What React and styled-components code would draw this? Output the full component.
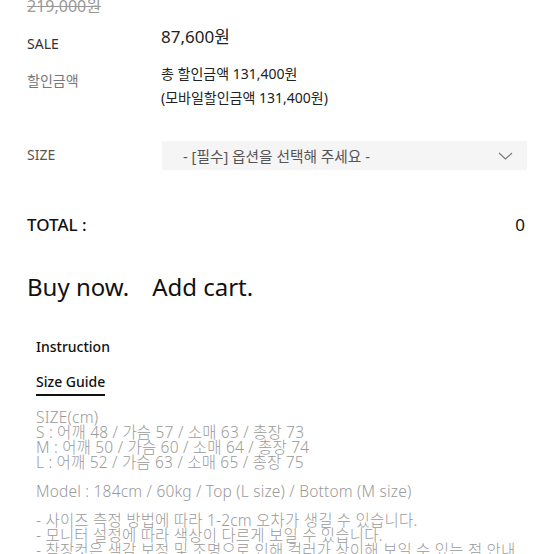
import React from "react";
import styled, { createGlobalStyle } from "styled-components";

const GlobalStyle = createGlobalStyle`
  html, body {
    margin: 0;
    padding: 0;
    background: #fff;
  }
  body {
    font-family: "Noto Sans", "Noto Sans CJK KR", sans-serif;
    color: #222;
    overflow: hidden;
  }
`;

// the screenshot is scrolled a bit, so the page starts slightly above the window
const Page = styled.div`
  width: 554px;
  margin-top: -5px;
  padding: 0 27px;
  box-sizing: border-box;
`;

const Row = styled.div`
  display: grid;
  grid-template-columns: 134px 1fr;
  align-items: start;
  margin-top: ${(p) => p.$gap || 0}px;
`;

const Label = styled.div`
  font-size: 14px;
  line-height: 24px;
  color: ${(p) => p.$color || "#333"};
  padding-top: ${(p) => p.$offset || 0}px;
`;

const OldPrice = styled.div`
  font-size: 16px;
  line-height: 22px;
  color: #999;
  text-decoration: line-through;
`;

const SalePrice = styled.div`
  font-size: 17px;
  line-height: 26px;
  color: #222;
`;

const DiscountText = styled.div`
  font-size: 14px;
  line-height: 24px;
  color: #222;
`;

const Select = styled.div`
  height: 29px;
  margin-left: 1px;
  background: #f5f5f5;
  display: flex;
  align-items: center;
  justify-content: space-between;
  padding: 0 14px 0 21px;
  font-size: 14.7px;
  color: #555;
`;

const TotalRow = styled.div`
  display: flex;
  justify-content: space-between;
  align-items: center;
  margin-top: 43px;
  font-size: 17px;
  line-height: 24px;
  font-weight: 500;
  color: #111;
`;

const TotalValue = styled.span`
  font-weight: 400;
  margin-right: 2px;
`;

const Actions = styled.div`
  display: flex;
  gap: 23px;
  margin-top: 32px;
`;

const ActionButton = styled.button`
  border: 0;
  background: none;
  padding: 0;
  font-family: inherit;
  font-size: 24px;
  line-height: 36px;
  color: #111;
  cursor: pointer;
`;

const Detail = styled.div`
  padding-left: 9px;
  margin-top: 32px;
`;

const Tab = styled.div`
  display: inline-block;
  font-size: 14px;
  line-height: 20px;
  font-weight: 500;
  color: #111;
  padding-bottom: 2px;
  border-bottom: 2px solid ${(p) => (p.$active ? "#111" : "transparent")};
`;

const Tabs = styled.div`
  display: flex;
  flex-direction: column;
  align-items: flex-start;
  gap: 11px;
`;

const Guide = styled.div`
  margin-top: 14px;
  font-size: 15.5px;
  line-height: 15px;
  letter-spacing: 0.2px;
  font-weight: 300;
  color: #9a9a9a;
`;

const Para = styled.p`
  margin: 0 0 14px;
`;

const Chevron = () => (
  <svg width="15" height="8" viewBox="0 0 15 8" fill="none">
    <path d="M1 1 L7.5 7 L14 1" stroke="#777" strokeWidth="1.1" />
  </svg>
);

const App = () => {
  return (
    <>
      <GlobalStyle />
      <Page>
        <OldPrice>219,000원</OldPrice>

        <Row $gap={7}>
          <Label $offset={8}>SALE</Label>
          <SalePrice>87,600원</SalePrice>
        </Row>

        <Row $gap={6}>
          <Label $color="#777" $offset={7}>할인금액</Label>
          <div>
            <DiscountText>총 할인금액 131,400원</DiscountText>
            <DiscountText>(모바일할인금액 131,400원)</DiscountText>
          </div>
        </Row>

        <Row $gap={31}>
          <Label $color="#555" $offset={2}>SIZE</Label>
          <Select>
            <span>- [필수] 옵션을 선택해 주세요 -</span>
            <Chevron />
          </Select>
        </Row>

        <TotalRow>
          <span>TOTAL :</span>
          <TotalValue>0</TotalValue>
        </TotalRow>

        <Actions>
          <ActionButton>Buy now.</ActionButton>
          <ActionButton>Add cart.</ActionButton>
        </Actions>

        <Detail>
          <Tabs>
            <Tab>Instruction</Tab>
            <Tab $active>Size Guide</Tab>
          </Tabs>

          <Guide>
            <Para>
              SIZE(cm)
              <br />S : 어깨 48 / 가슴 57 / 소매 63 / 총장 73
              <br />M : 어깨 50 / 가슴 60 / 소매 64 / 총장 74
              <br />L : 어깨 52 / 가슴 63 / 소매 65 / 총장 75
            </Para>
            <Para>Model : 184cm / 60kg / Top (L size) / Bottom (M size)</Para>
            <Para>
              - 사이즈 측정 방법에 따라 1-2cm 오차가 생길 수 있습니다.
              <br />- 모니터 설정에 따라 색상이 다르게 보일 수 있습니다.
              <br />- 착장컷은 색감 보정 및 조명으로 인해 컬러가 상이해 보일 수 있는 점 안내드립니다.
            </Para>
          </Guide>
        </Detail>
      </Page>
    </>
  );
};

export default App;
